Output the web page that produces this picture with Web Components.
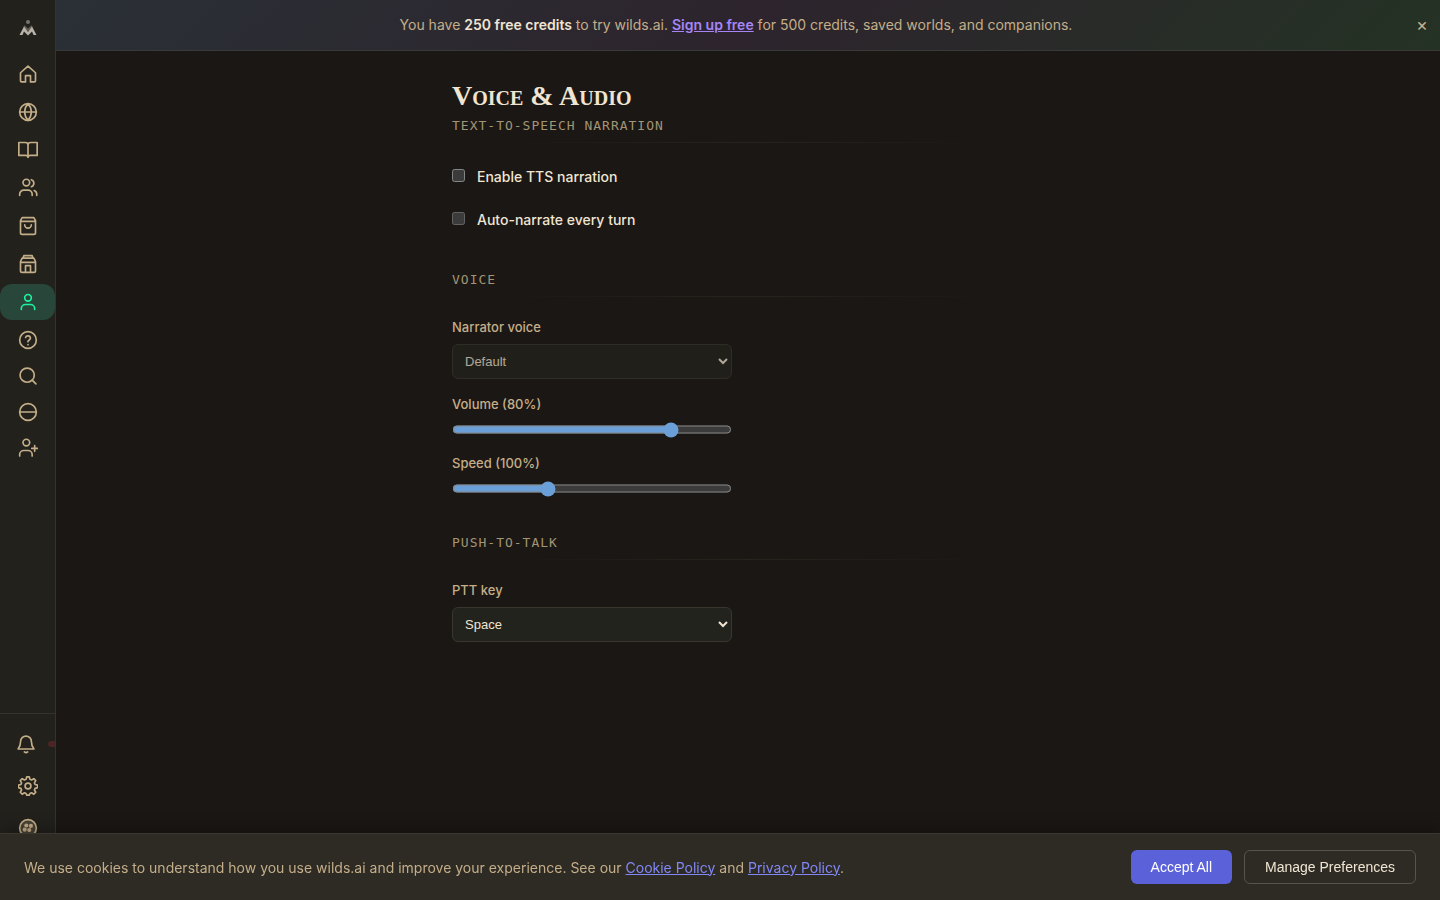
<!DOCTYPE html>
<html lang="en">
<head>
<meta charset="utf-8">
<meta name="viewport" content="width=device-width, initial-scale=1">
<title>Voice &amp; Audio - wilds.ai</title>
<style>
	:root {
		color-scheme: dark;
		--bg: #1b1714;
		--panel: #22211c;
		--field: #23231d;
		--line: #37322c;
		--text: #f0e4d2;
		--muted: #c4ae89;
		--dim: #a39474;
		--green: #1df2a0;
		--sans: Inter, "Liberation Sans", sans-serif;
		--arial: "Liberation Sans", Arial, sans-serif;
	}
	body {
		margin: 0;
		background: var(--bg);
		color: var(--text);
		font: 14px/20px var(--sans);
	}
</style>
</head>
<body>
<app-shell>
	<side-nav slot="nav">
		<nav-item icon="home" label="Home"></nav-item>
		<nav-item icon="globe" label="Worlds"></nav-item>
		<nav-item icon="book" label="Stories"></nav-item>
		<nav-item icon="users" label="Companions"></nav-item>
		<nav-item icon="bag" label="Shop"></nav-item>
		<nav-item icon="store" label="Market"></nav-item>
		<nav-item icon="user" label="Profile" active></nav-item>
		<nav-item icon="help" label="Help" tight></nav-item>
		<nav-item icon="search" label="Search" tight></nav-item>
		<nav-item icon="orb" label="Theme" tight></nav-item>
		<nav-item icon="userplus" label="Invite" tight></nav-item>
		<nav-item slot="foot" icon="bell" label="Notifications" tall badge></nav-item>
		<nav-item slot="foot" icon="gear" label="Settings" tall></nav-item>
		<nav-item slot="foot" icon="avatar" label="Account" tall></nav-item>
	</side-nav>
	<promo-banner slot="top"></promo-banner>
	<settings-page heading="Voice &amp; Audio">
		<settings-section heading="Text-to-speech narration">
			<check-row label="Enable TTS narration"></check-row>
			<check-row label="Auto-narrate every turn" disabled></check-row>
		</settings-section>
		<settings-section heading="Voice">
			<select-field label="Narrator voice" options="Default" disabled></select-field>
			<range-field label="Volume" min="0" max="100" value="80"></range-field>
			<range-field label="Speed" min="50" max="200" value="100"></range-field>
		</settings-section>
		<settings-section heading="Push-to-talk">
			<select-field label="PTT key" options="Space,Left Ctrl,Left Alt"></select-field>
		</settings-section>
	</settings-page>
	<cookie-bar slot="bottom"></cookie-bar>
</app-shell>

<script>
// 24x24 stroke icons
const ICONS = {
	home: '<path d="M3 10.500 12 2.500l9 8V20a1.500 1.500 0 0 1-1.500 1.500H15V14H9v7.500H4.500A1.500 1.500 0 0 1 3 20z"/>',
	globe: '<circle cx="12" cy="12" r="10"/><path d="M2 12h20M12 2a15.300 15.300 0 0 1 4 10 15.300 15.300 0 0 1-4 10 15.300 15.300 0 0 1-4-10 15.300 15.300 0 0 1 4-10z"/>',
	book: '<path d="M12 6c0-1.700-1.300-3-3-3H1v15.500h8c1.700 0 3 .8 3 2.500 0-1.700 1.300-2.500 3-2.500h8V3h-8c-1.700 0-3 1.300-3 3zM12 6v15"/>',
	users: '<circle cx="10" cy="5.500" r="4"/><path d="M2 21v-1.500a5 5 0 0 1 5-5h5a5 5 0 0 1 5 5V21M16 2a4.500 4.500 0 0 1 0 8.500M19.500 15c2 .8 3 2.500 3 4.500V21"/>',
	bag: '<path d="M5 2h14l2 3.500V20a2 2 0 0 1-2 2H5a2 2 0 0 1-2-2V5.500zM3 6.500h18M16 10.500a4 4 0 0 1-8 0"/>',
	store: '<path d="M6 5l1-3h10l1 3M5 5h14l2 4v11a2 2 0 0 1-2 2H5a2 2 0 0 1-2-2V9zM3 10h18M9 22v-8h6v8"/>',
	user: '<circle cx="12" cy="7" r="4"/><path d="M4 21v-1a5 5 0 0 1 5-5h6a5 5 0 0 1 5 5v1"/>',
	help: '<circle cx="12" cy="12" r="10"/><path d="M9.100 9a3 3 0 0 1 5.800 1c0 2-3 2.500-3 4M12 17.500v.1"/>',
	search: '<circle cx="11" cy="11" r="8.500"/><path d="m21.500 21.500-4.500-4.500"/>',
	orb: '<circle cx="12" cy="12" r="10"/><path d="M2 12h20"/>',
	userplus: '<circle cx="10" cy="5.500" r="4"/><path d="M2 21.500V20a5 5 0 0 1 5-5h5a5 5 0 0 1 5 5v1.500M20 9v7M16.500 12.500h7"/>',
	bell: '<path d="M2.500 18c2-2.500 3-5 3-9a6.500 6.500 0 0 1 13 0c0 4 1 6.500 3 9zM10 21.500c1.200 1 2.800 1 4 0"/>',
	gear: '<circle cx="12" cy="12" r="3.500"/><path d="M10.500 1.500h3l.8 3 2 .8 2.700-1.600 2.300 2.300-1.600 2.700.8 2 3 .8v3l-3 .8-.8 2 1.600 2.700-2.300 2.300-2.700-1.600-2 .8-.8 2h-3l-.8-2-2-.8L5 22.300 2.700 20l1.600-2.700-.8-2-3-.8v-3l3-.8.8-2L2.700 6 5 3.700l2.700 1.600 2-.8z" transform="translate(0 -.5)"/>',
	avatar: '<circle cx="12" cy="12" r="10" fill="#4a4337"/><g fill="currentColor" stroke="none"><circle cx="10" cy="9" r="2.500"/><circle cx="15.500" cy="9.500" r="2.500"/><circle cx="8" cy="14" r="2.500"/><circle cx="13.500" cy="14.500" r="2.500"/></g>'
};

class BaseElement extends HTMLElement {
	connectedCallback() {
		if (this.shadowRoot) return;
		this.attachShadow({mode: 'open'});
		this.shadowRoot.innerHTML = this.render();
		this.ready();
	}
	ready() {}
	attr(name) {
		return (this.getAttribute(name) || '').replace(/&/g, '&amp;');
	}
}

customElements.define('app-shell', class extends BaseElement {
	render() {
		return `
		<style>
			:host { display: grid; grid-template-columns: 56px 1fr; min-height: 100vh; }
			.content { min-width: 0; }
		</style>
		<slot name="nav"></slot>
		<div class="content"><slot name="top"></slot><main><slot></slot></main></div>
		<slot name="bottom"></slot>`;
	}
});

customElements.define('side-nav', class extends BaseElement {
	render() {
		return `
		<style>
			:host {
				display: flex; flex-direction: column; box-sizing: border-box;
				position: sticky; top: 0; height: 100vh; overflow: hidden;
				background: var(--panel); border-right: 1px solid var(--line);
			}
			.logo { display: flex; justify-content: center; padding: 18px 0; color: #b9b2a6; }
			nav { display: flex; flex-direction: column; }
			.foot {
				display: flex; flex-direction: column; margin-top: auto;
				padding: 9px 0 51px; border-top: 1px solid var(--line);
			}
		</style>
		<a class="logo" href="#" aria-label="wilds.ai">
			<svg width="20" height="20" viewBox="0 0 20 20">
				<circle cx="10" cy="4" r="2" fill="#77736b"/>
				<path d="M6 8l4 4 4-4" fill="none" stroke="#5f5b54" stroke-width="2"/>
				<path d="M1.500 17 6 8.500l4 5.500 4-5.500 4.500 8.500h-3L14 13.500 10 17.500l-4-4L4.500 17z" fill="currentColor"/>
			</svg>
		</a>
		<nav><slot></slot></nav>
		<div class="foot"><slot name="foot"></slot></div>`;
	}
});

customElements.define('nav-item', class extends BaseElement {
	render() {
		return `
		<style>
			:host { display: block; padding-bottom: 2px; color: var(--muted); }
			:host([tight]) { padding-bottom: 0; }
			:host([tall]) { padding: 3px 0; }
			:host([active]) { color: var(--green); }
			a {
				display: flex; align-items: center; justify-content: center;
				position: relative; height: 36px; border-radius: 12px; color: inherit;
			}
			:host([active]) a { background: #28463a; }
			:host([badge]) a { padding-right: 4px; }
			svg { fill: none; stroke: currentColor; stroke-width: 2; stroke-linecap: round; stroke-linejoin: round; }
			.badge {
				position: absolute; right: -7px; top: 15px;
				width: 14px; height: 6px; border-radius: 3px; background: #482626;
			}
		</style>
		<a href="#" aria-label="${this.attr('label')}">
			<svg width="20" height="20" viewBox="0 0 24 24">${ICONS[this.getAttribute('icon')]}</svg>
			${this.hasAttribute('badge') ? '<span class="badge"></span>' : ''}
		</a>`;
	}
});

customElements.define('promo-banner', class extends BaseElement {
	render() {
		return `
		<style>
			:host {
				display: flex; align-items: center; box-sizing: border-box;
				padding: 15px 8px 15px 16px; color: var(--muted);
				background: linear-gradient(135deg, #2a3036 0%, #2d242d 50%, #243224 100%);
				border-bottom: 1px solid #383a3a;
			}
			p { flex: 1; margin: 0; text-align: center; }
			strong { font-weight: 600; color: var(--text); }
			a { font-weight: 600; color: #a585f7; }
			button {
				width: 20px; margin-left: 12px; padding: 0; border: 0; background: none;
				color: var(--muted); font: 18px/20px var(--sans); cursor: pointer;
			}
		</style>
		<p>You have <strong>250 free credits</strong> to try wilds.ai. <a href="#">Sign up free</a> for 500 credits, saved worlds, and companions.</p>
		<button type="button" aria-label="Dismiss">×</button>`;
	}
	ready() {
		this.shadowRoot.querySelector('button').addEventListener('click', () => this.remove());
	}
});

customElements.define('settings-page', class extends BaseElement {
	render() {
		return `
		<style>
			:host { display: block; box-sizing: border-box; max-width: 640px; margin: 0 auto; padding: 29px 24px 100px; }
			h1 { margin: 0 0 4px; font: small-caps bold 28px/32px "Liberation Serif", serif; color: var(--text); }
			.sections { display: flex; flex-direction: column; gap: 36px; }
		</style>
		<h1>${this.attr('heading')}</h1>
		<div class="sections"><slot></slot></div>`;
	}
});

customElements.define('settings-section', class extends BaseElement {
	render() {
		return `
		<style>
			:host { display: block; }
			h2 {
				margin: 0 0 6px; color: var(--dim); text-transform: uppercase;
				font: 13px/20px "DejaVu Sans Mono", monospace; letter-spacing: 1px;
			}
			.rule { height: 1px; background: linear-gradient(90deg, transparent 10%, #28231c 50%, transparent 90%); }
			.body { display: flex; flex-direction: column; gap: 15px; margin-top: 20px; }
		</style>
		<h2>${this.attr('heading')}</h2>
		<div class="rule"></div>
		<div class="body"><slot></slot></div>`;
	}
});

customElements.define('check-row', class extends BaseElement {
	render() {
		return `
		<style>
			:host { display: block; }
			label { display: flex; align-items: flex-start; gap: 12px; font-weight: 500; line-height: 28px; }
			input { width: 13px; height: 13px; margin: 6px 0 0; }
		</style>
		<label><input type="checkbox" ${this.hasAttribute('disabled') ? 'disabled' : ''}>${this.attr('label')}</label>`;
	}
});

const fieldStyle = `
	:host { display: flex; flex-direction: column; gap: 7px; max-width: 280px; }
	label { color: var(--muted); font-size: 13px; font-weight: 500; line-height: 20px; }
`;

customElements.define('select-field', class extends BaseElement {
	render() {
		const options = this.attr('options').split(',').map(o => `<option>${o}</option>`).join('');
		return `
		<style>
			${fieldStyle}
			select {
				width: 100%; height: 35px; padding: 0 8px; box-sizing: border-box;
				border: 1px solid #3a362e; border-radius: 6px;
				background: var(--field); color: var(--text); font: 13px var(--arial);
			}
			select:disabled { opacity: .7; }
		</style>
		<label for="field">${this.attr('label')}</label>
		<select id="field" ${this.hasAttribute('disabled') ? 'disabled' : ''}>${options}</select>`;
	}
});

customElements.define('range-field', class extends BaseElement {
	render() {
		return `
		<style>
			${fieldStyle}
			input { width: 100%; height: 17px; margin: 0; accent-color: #6a9fd8; }
		</style>
		<label for="field"></label>
		<input id="field" type="range" min="${this.attr('min')}" max="${this.attr('max')}" value="${this.attr('value')}">`;
	}
	ready() {
		const input = this.shadowRoot.querySelector('input');
		const label = this.shadowRoot.querySelector('label');
		const update = () => { label.textContent = `${this.getAttribute('label')} (${input.value}%)`; };
		input.addEventListener('input', update);
		update();
	}
});

customElements.define('cookie-bar', class extends BaseElement {
	render() {
		return `
		<style>
			:host {
				display: flex; align-items: center; gap: 24px; box-sizing: border-box;
				position: fixed; left: 0; right: 0; bottom: 0; padding: 16px 24px;
				background: #2e2b25; border-top: 1px solid #3a3731; color: var(--muted);
				box-shadow: 0 -4px 16px rgba(0, 0, 0, .3);
			}
			p { flex: 1; margin: 0; line-height: 21px; }
			a { color: #8187f5; }
			.actions { display: flex; gap: 12px; }
			button {
				height: 34px; padding: 0 20px; border: 1px solid #57534e; border-radius: 6px;
				background: transparent; color: var(--text); font: 14px var(--arial); cursor: pointer;
			}
			.primary { border: 0; background: #5b62d9; color: #fff; }
		</style>
		<p>We use cookies to understand how you use wilds.ai and improve your experience. See our <a href="#">Cookie Policy</a> and <a href="#">Privacy Policy</a>.</p>
		<div class="actions">
			<button type="button" class="primary">Accept All</button>
			<button type="button">Manage Preferences</button>
		</div>`;
	}
	ready() {
		this.shadowRoot.querySelector('.primary').addEventListener('click', () => this.remove());
	}
});
</script>
</body>
</html>
